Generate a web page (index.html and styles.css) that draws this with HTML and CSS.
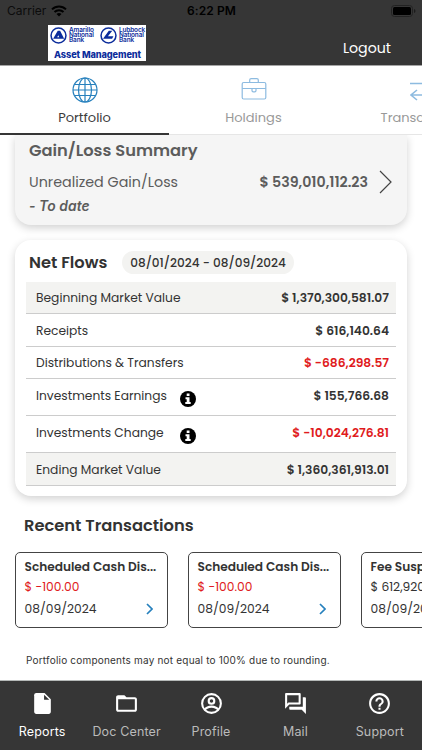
FILE: index.html
```html
<!DOCTYPE html>
<html lang="en">
<head>
    <meta charset="UTF-8">
    <meta name="viewport" content="width=device-width, initial-scale=1">
    <title>Portfolio - Asset Management</title>
    <link rel="stylesheet" href="styles.css">
</head>
<body>
    <header class="header">
        <div class="status-bar">
            <div class="carrier">
                <span>Carrier</span>
                <svg class="wifi" viewBox="0 0 16 12">
                    <path d="M1 4.400a10 10 0 0 1 14 0M3.500 7a6.400 6.400 0 0 1 9 0" fill="none" stroke="#000" stroke-width="2"/>
                    <path d="M8 11.600 5.500 9.100a3.600 3.600 0 0 1 5 0z"/>
                </svg>
            </div>
            <div class="time">6:22 PM</div>
            <div class="battery-wrap">
                <svg class="battery" viewBox="0 0 25 12">
                    <rect x=".5" y=".5" width="21" height="11" rx="3" fill="none" stroke="#222"/>
                    <rect x="2" y="2" width="18" height="8" rx="1.500"/>
                    <path d="M23 4v4q1.500-.6 1.500-2T23 4z" fill="#1c1c1c"/>
                </svg>
            </div>
        </div>
        <div class="title-bar">
            <div class="logo">
                <div class="logo-banks">
                    <svg class="logo-mark" viewBox="0 0 18 18">
                        <circle cx="9" cy="9" r="7.900" fill="none" stroke="#0c2d9c" stroke-width="1.600"/>
                        <path d="M8.200 4h2.500l4.300 8.500h-4.500L8.800 8.700l-1.200 2.200h2.200l1 1.600H3.300z" fill="#0c2d9c"/>
                    </svg>
                    <div class="bank-name">Amarillo<br>National<br>Bank</div>
                    <svg class="logo-mark second" viewBox="0 0 18 18">
                        <circle cx="9" cy="9" r="7.900" fill="none" stroke="#0c2d9c" stroke-width="1.600"/>
                        <path d="M9.300 4H13L8.400 9.800h5.800l-1.400 2.700H3.200z" fill="#0c2d9c"/>
                    </svg>
                    <div class="bank-name">Lubbock<br>National<br>Bank</div>
                </div>
                <div class="logo-title">Asset Management</div>
            </div>
            <div class="logout">Logout</div>
        </div>
    </header>

    <nav class="tabs">
        <div class="tab active">
            <svg class="tab-icon" viewBox="0 0 26 26">
                <g fill="none" stroke="#2680bd" stroke-width="1.200">
                    <circle cx="13" cy="13" r="12"/>
                    <ellipse cx="13" cy="13" rx="6.500" ry="12"/>
                    <path d="M13 1v24M1 13h24M3 7.500h20M3 18.500h20"/>
                </g>
            </svg>
            <span class="tab-label">Portfolio</span>
        </div>
        <div class="tab">
            <svg class="tab-icon" viewBox="0 0 26 26">
                <g fill="none" stroke="#8dbbe0" stroke-width="1.200">
                    <rect x="1.200" y="5.500" width="23.600" height="16.500" rx="1.500"/>
                    <path d="M8.700 5.500V3q0-1.400 1.400-1.400h5.800q1.400 0 1.400 1.400v2.500M1.200 11.500h9.800M15 11.500h9.800M11 11.500v2q0 1.300 1.300 1.300h1.400q1.300 0 1.300-1.300v-2z"/>
                </g>
            </svg>
            <span class="tab-label">Holdings</span>
        </div>
        <div class="tab">
            <svg class="tab-icon" viewBox="0 0 26 26">
                <path d="M0 6.500h23M18 1.500l5 5-5 5M25 18H1M7 13l-6 5 6 5" fill="none" stroke="#8dbbe0" stroke-width="1.600"/>
            </svg>
            <span class="tab-label">Transactions</span>
        </div>
    </nav>

    <main class="content">
        <section class="card gain-card">
            <h2 class="gain-title">Gain/Loss Summary</h2>
            <div class="gain-row">
                <div class="gain-label">Unrealized Gain/Loss</div>
                <div class="gain-value">$ 539,010,112.23</div>
                <svg class="gain-arrow" viewBox="0 0 13 24"><path d="M1 1l11 11L1 23" fill="none" stroke="#444" stroke-width="1.200"/></svg>
            </div>
            <div class="gain-date">- To date</div>
        </section>

        <section class="card flows-card">
            <div class="flows-head">
                <h2 class="flows-title">Net Flows</h2>
                <span class="date-pill">08/01/2024 - 08/09/2024</span>
            </div>
            <div class="flows-table">
                <div class="flow-row shaded"><span class="name">Beginning Market Value</span><span class="amount">$ 1,370,300,581.07</span></div>
                <div class="flow-row"><span class="name">Receipts</span><span class="amount">$ 616,140.64</span></div>
                <div class="flow-row"><span class="name">Distributions &amp; Transfers</span><span class="amount negative">$ -686,298.57</span></div>
                <div class="flow-row tall">
                    <span class="name with-info">Investments Earnings</span>
                    <svg class="info" viewBox="0 0 16 16"><circle cx="8" cy="8" r="8"/><path d="M6.700 2.500h2.800v2.600H6.700zM5.500 6.300h4v4.800h1.200V13H5.300v-1.900h1.400V8.200H5.500z" fill="#fff"/></svg>
                    <span class="amount">$ 155,766.68</span>
                </div>
                <div class="flow-row tall">
                    <span class="name with-info">Investments Change</span>
                    <svg class="info" viewBox="0 0 16 16"><circle cx="8" cy="8" r="8"/><path d="M6.700 2.500h2.800v2.600H6.700zM5.500 6.300h4v4.800h1.200V13H5.300v-1.900h1.400V8.200H5.500z" fill="#fff"/></svg>
                    <span class="amount negative">$ -10,024,276.81</span>
                </div>
                <div class="flow-row shaded"><span class="name">Ending Market Value</span><span class="amount">$ 1,360,361,913.01</span></div>
            </div>
        </section>

        <h2 class="recent-title">Recent Transactions</h2>
        <div class="transactions">
            <div class="transaction">
                <div class="trans-name">Scheduled Cash Dis...</div>
                <div class="trans-amount negative">$ -100.00</div>
                <div class="trans-date">08/09/2024
                    <svg class="trans-arrow" viewBox="0 0 7 12"><path d="M1 1l5 5-5 5" fill="none" stroke="#2680bd" stroke-width="1.700"/></svg>
                </div>
            </div>
            <div class="transaction">
                <div class="trans-name">Scheduled Cash Dis...</div>
                <div class="trans-amount negative">$ -100.00</div>
                <div class="trans-date">08/09/2024
                    <svg class="trans-arrow" viewBox="0 0 7 12"><path d="M1 1l5 5-5 5" fill="none" stroke="#2680bd" stroke-width="1.700"/></svg>
                </div>
            </div>
            <div class="transaction">
                <div class="trans-name">Fee Suspense</div>
                <div class="trans-amount">$ 612,920.64</div>
                <div class="trans-date">08/09/2024</div>
            </div>
        </div>
        <p class="note">Portfolio components may not equal to 100% due to rounding.</p>
    </main>

    <footer class="bottom-nav">
        <div class="nav-item active">
            <svg viewBox="0 0 24 24"><path d="M6 2c-1.100 0-2 .9-2 2v16c0 1.100.9 2 2 2h12c1.100 0 2-.9 2-2V8l-6-6H6z"/><path d="M13.500 3.500V8.500h5z" fill="#363636"/></svg>
            <span>Reports</span>
        </div>
        <div class="nav-item">
            <svg viewBox="0 0 24 24"><path d="M20 6h-8l-2-2H4c-1.100 0-2 .9-2 2v12c0 1.100.9 2 2 2h16c1.100 0 2-.9 2-2V8c0-1.100-.9-2-2-2zm0 12H4V8h16v10z"/></svg>
            <span>Doc Center</span>
        </div>
        <div class="nav-item">
            <svg viewBox="0 0 24 24"><g fill="none" stroke="#fff" stroke-width="2"><circle cx="12" cy="12" r="9"/><circle cx="12" cy="9.500" r="2.700"/><path d="M5.500 18c2.800-4 10.200-4 13 0"/></g></svg>
            <span>Profile</span>
        </div>
        <div class="nav-item">
            <svg viewBox="0 0 24 24"><path d="M15 4v7H5.170L4 12.170V4h11m1-2H3c-.55 0-1 .45-1 1v14l4-4h10c.55 0 1-.45 1-1V3c0-.55-.45-1-1-1zm5 4h-2v9H6v2c0 .55.45 1 1 1h11l4 4V7c0-.55-.45-1-1-1z"/></svg>
            <span>Mail</span>
        </div>
        <div class="nav-item">
            <svg viewBox="0 0 24 24"><path d="M11 18h2v-2h-2v2zm1-16C6.480 2 2 6.480 2 12s4.480 10 10 10 10-4.480 10-10S17.520 2 12 2zm0 18c-4.410 0-8-3.590-8-8s3.590-8 8-8 8 3.590 8 8-3.590 8-8 8zm0-14c-2.210 0-4 1.790-4 4h2c0-1.100.9-2 2-2s2 .9 2 2c0 2-3 1.750-3 5h2c0-2.250 3-2.500 3-5 0-2.210-1.790-4-4-4z"/></svg>
            <span>Support</span>
        </div>
    </footer>
</body>
</html>
```
FILE: styles.css
```css
* {
    box-sizing: border-box;
}
body {
    margin: 0;
    height: 750px;
    display: flex;
    flex-direction: column;
    overflow: hidden;
    background: #fff;
    color: #333;
    font-family: Poppins, Inter, "Liberation Sans", sans-serif;
}
h2 {
    margin: 0;
    font-weight: 600;
    white-space: nowrap;
}
svg {
    display: block;
    flex-shrink: 0;
}

/* header */
.header {
    height: 66px;
    flex-shrink: 0;
    background: #363636;
    border-bottom: 1px solid #a5a5a5;
}
.status-bar {
    height: 22px;
    padding: 0 6px 1px 7px;
    display: flex;
    align-items: center;
    color: #000;
    font-family: Inter, sans-serif;
    font-size: 12px;
}
.carrier, .battery-wrap {
    flex: 1;
    display: flex;
    align-items: center;
    gap: 5px;
}
.carrier {
    color: #0c0c0c;
}
.wifi {
    width: 16px;
    height: 12px;
}
.time {
    font-weight: 600;
    letter-spacing: 0.1px;
}
.battery-wrap {
    justify-content: flex-end;
}
.battery {
    width: 25px;
    height: 12px;
}
.title-bar {
    display: flex;
    justify-content: space-between;
    padding: 3px 31px 0 48px;
}
.logo {
    width: 98px;
    height: 36px;
    background: #fff;
    color: #0c2d9c;
    padding: 2px 1px 0 2px;
    font-family: Inter, sans-serif;
}
.logo-banks {
    display: flex;
    gap: 2px;
}
.logo-mark {
    width: 17px;
    height: 17px;
}
.logo-mark.second {
    margin-left: 3px;
}
.bank-name {
    width: 26px;
    padding-top: 1px;
    font-size: 6.400px;
    line-height: 5.200px;
    font-weight: 600;
    letter-spacing: -0.1px;
    white-space: nowrap;
}
.logo-title {
    text-align: center;
    margin-top: 5px;
    font-size: 9.200px;
    line-height: 12px;
    font-weight: 800;
    letter-spacing: -0.1px;
    white-space: nowrap;
}
.logout {
    padding-top: 13px;
    font-size: 14.200px;
    line-height: 20px;
    color: #fff;
}

/* top tabs */
.tabs {
    height: 69px;
    flex-shrink: 0;
    display: flex;
    overflow: hidden;
    box-shadow: inset 0 -1px #e6e6e6;
}
.tab {
    width: 169px;
    height: 69px;
    flex-shrink: 0;
    display: flex;
    flex-direction: column;
    align-items: center;
    padding-top: 11px;
    color: #999;
}
.tab.active {
    color: #3c3c3c;
    border-bottom: 2px solid #363636;
}
.tab-icon {
    width: 26px;
    height: 26px;
}
.tab-label {
    margin-top: 5px;
    font-size: 13px;
    line-height: 20px;
}

/* scrolling area */
.content {
    flex: 1;
    min-height: 0;
    overflow: hidden;
}
.card {
    margin: 0 15px;
    border-radius: 16px;
    box-shadow: 0 3px 9px rgba(0, 0, 0, 0.18);
}
.gain-card {
    height: 90px;
    padding: 5px 15px 0 14px;
    border-radius: 0 0 16px 16px;
    background: #f5f5f5;
    color: #5c5c5c;
}
.gain-title {
    font-size: 16.300px;
    line-height: 22px;
}
.gain-row {
    display: flex;
    align-items: center;
    height: 24px;
    margin-top: 8px;
}
.gain-label {
    flex: 1;
    font-size: 14.300px;
}
.gain-value {
    font-size: 14.200px;
    font-weight: 600;
    margin-right: 11px;
}
.gain-arrow {
    width: 13px;
    height: 24px;
}
.gain-date {
    font-family: Inter, sans-serif;
    font-size: 13.800px;
    line-height: 24px;
    font-style: italic;
    font-weight: 600;
    letter-spacing: 0.1px;
}
.flows-card {
    height: 256px;
    margin-top: 15px;
    padding: 11px 11px 0;
    background: #fff;
}
.flows-head {
    display: flex;
    align-items: center;
    height: 23px;
    padding-left: 3px;
}
.flows-title {
    width: 93px;
    font-size: 16.300px;
}
.date-pill {
    width: 172px;
    height: 23px;
    border-radius: 12px;
    background: #f3f3f1;
    text-align: center;
    font-size: 12.100px;
    line-height: 24px;
    font-weight: 500;
}
.flows-table {
    margin-top: 7.500px;
}
.flow-row {
    display: flex;
    height: 32.600px;
    padding: 6.500px 7px 0 10px;
    border-bottom: 1px solid #ccc;
    font-size: 12.250px;
    line-height: 20px;
    white-space: nowrap;
}
.flow-row.tall {
    height: 37px;
}
.shaded {
    background: #f3f3f1;
}
.with-info {
    width: 144px;
}
.info {
    width: 16px;
    height: 16px;
    margin-top: 5px;
}
.amount {
    margin-left: auto;
    font-weight: 600;
}
.negative {
    color: #e01a20;
}

/* recent transactions */
.recent-title {
    margin: 19px 0 0 24px;
    font-size: 16.300px;
    line-height: 22px;
}
.transactions {
    display: flex;
    gap: 20px;
    margin: 15px 0 0 15px;
}
.transaction {
    width: 153px;
    height: 76px;
    flex-shrink: 0;
    padding: 4px 7px 0 8.500px;
    border: 1px solid #444;
    border-radius: 5px;
    white-space: nowrap;
}
.trans-name {
    font-size: 12.150px;
    line-height: 20px;
    font-weight: 600;
}
.trans-amount {
    font-size: 12.250px;
    line-height: 20px;
}
.trans-date {
    display: flex;
    align-items: center;
    justify-content: space-between;
    padding-right: 7px;
    margin-top: 1px;
    font-size: 12.250px;
    line-height: 22px;
}
.trans-arrow {
    width: 7px;
    height: 12px;
}
.note {
    margin: 24px 0 0 26px;
    font-family: Inter, sans-serif;
    font-size: 10px;
    line-height: 16px;
    letter-spacing: 0.200px;
}

/* bottom navigation */
.bottom-nav {
    height: 70px;
    flex-shrink: 0;
    display: flex;
    background: #363636;
    border-top: 1px solid #b5b9b8;
    font-family: Inter, sans-serif;
}
.nav-item {
    flex: 1;
    display: flex;
    flex-direction: column;
    align-items: center;
    padding-top: 10px;
    color: #bbb;
    font-size: 12.500px;
    line-height: 20px;
    letter-spacing: 0.150px;
    white-space: nowrap;
}
.nav-item.active {
    color: #fff;
}
.nav-item svg {
    width: 25px;
    height: 25px;
    margin-bottom: 6px;
    fill: #fff;
}
```
